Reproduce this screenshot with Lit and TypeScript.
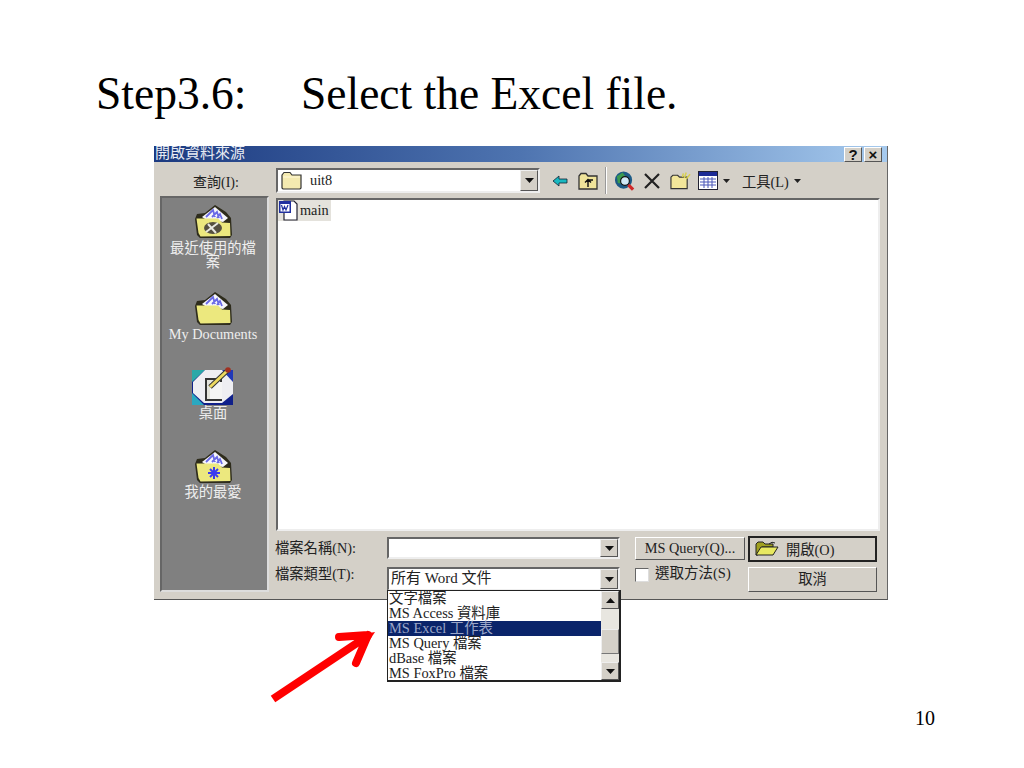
import { LitElement, html, css, svg } from "lit";
import { customElement } from "lit/decorators.js";

const caret = html`<svg class="caret" width="9" height="5" viewBox="0 0 9 5"><path d="M0 0H9L4.5 5Z" fill="#111"/></svg>`;
const caretSmall = html`<svg class="caret" width="7" height="4" viewBox="0 0 7 4"><path d="M0 0H7L3.5 4Z" fill="#222"/></svg>`;
const caretUp = html`<svg class="caret" width="9" height="5" viewBox="0 0 9 5"><path d="M0 5H9L4.5 0Z" fill="#111"/></svg>`;

function placeFolder(badge: unknown) {
  return html`<svg width="40" height="33" viewBox="0 0 40 33">
    <path d="M2 14 L4 9 L12 8 L22 0 L33 7 L38 13 L39 30 L37 33 L7 33 L4 30Z" fill="#2e2c1c"/>
    <path d="M9 12 L22 2 L35 13 L30 17 L12 14Z" fill="#f6f6fa"/>
    <path d="M13 12 L20 5 L22 12 M19 12 L24 7 L26 13 M24 13 L27 9 L29 14" fill="none" stroke="#6a6ae6" stroke-width="1.8"/>
    <path d="M3.5 13.5 L25 13.5 L29 17.5 L37 18 L37.5 31 L7.5 31.5 L5.5 28Z" fill="#ece87e"/>
    ${badge}
  </svg>`;
}

const recentBadge = svg`<ellipse cx="20" cy="23" rx="9" ry="6" fill="#555040"/><path d="M13 27 L25 18 M15 19 L23 28" stroke="#e8e8e0" stroke-width="2"/>`;
const starBadge = svg`<path d="M21 17V29M15 23H27M17 19L25 27M25 19L17 27" stroke="#3a3af0" stroke-width="2"/>`;

const desktopIcon = html`<svg width="42" height="38" viewBox="0 0 42 38">
  <rect x="0" y="3" width="41" height="35" fill="#10208a"/>
  <path d="M0 3H13L0 15Z" fill="#2aa8a8"/>
  <path d="M41 3V15L30 3Z" fill="#2038b8"/>
  <path d="M0 38V26L12 38Z" fill="#2aa8c0"/>
  <path d="M13 3H30L41 15V27L30 36H12L1 26V15Z" fill="#eeeef2"/>
  <rect x="14" y="12" width="15" height="21" fill="#e4e4dc" stroke="#333" stroke-width="2"/>
  <rect x="18" y="15" width="12" height="17" fill="#f4f4f4"/>
  <path d="M18 20 L35 4" stroke="#333" stroke-width="5"/>
  <path d="M18 20 L35 4" stroke="#eeda60" stroke-width="3"/>
  <circle cx="36" cy="3" r="2.8" fill="#a03020"/>
</svg>`;

const smallFolder = html`<svg width="22" height="19" viewBox="0 0 22 19">
  <path d="M1 4 L3 1.5 H9 L11 4 H20 V17 L19 18 H2 L1 17Z" fill="#f4eab0" stroke="#333" stroke-width="1.2"/>
  <path d="M2 6 H19" stroke="#fff8d8"/>
</svg>`;

const wordIcon = html`<svg width="22" height="22" viewBox="0 0 22 22">
  <path d="M6 1 H16 L19 4 V20 H6Z" fill="#fff" stroke="#223" stroke-width="1.2"/>
  <rect x="1" y="1" width="12" height="12" fill="#2030a0"/>
  <rect x="2.5" y="4" width="9" height="7.5" fill="#fff"/>
  <path d="M3.5 5 L5 10 L6.5 6.5 L8 10 L10 5" fill="none" stroke="#2030a0" stroke-width="1.2"/>
</svg>`;

const toolbar = [
  html`<svg class="t1" width="16" height="12" viewBox="0 0 16 12"><path d="M1 6 L7 1 V4 H15 V8 H7 V11Z" fill="#18b8c0" stroke="#123" stroke-width=".8"/></svg>`,
  html`<svg class="t2" width="20" height="18" viewBox="0 0 20 18"><path d="M1 4 L3 1.5 H8 L10 4 H19 V17 H1Z" fill="#f0e49a" stroke="#333" stroke-width="1.3"/><path d="M10 15V8M7 10.5L10 7.5L13 10.5M10 8H15" fill="none" stroke="#111" stroke-width="1.4"/></svg>`,
  html`<span class="tb-sep"></span>`,
  html`<svg class="t3" width="21" height="22" viewBox="0 0 22 22"><circle cx="10" cy="10" r="9" fill="#1d5a86"/><path d="M3 6 L9 2 L12 6 L8 9 L9 14 L4 13Z" fill="#3a9a50"/><circle cx="11.5" cy="11" r="4.6" fill="#cfe8f6" stroke="#111" stroke-width="1.2"/><path d="M15 15 L20 20" stroke="#d02828" stroke-width="3.4"/></svg>`,
  html`<svg class="t4" width="18" height="18" viewBox="0 0 18 18"><path d="M2 2 L16 16 M16 2 L2 16" stroke="#222" stroke-width="2.2"/></svg>`,
  html`<svg class="t5" width="21" height="19" viewBox="0 0 22 19"><path d="M1 6 L3 4 H8 L10 6 H18 V18 H1Z" fill="#f2e69a" stroke="#333" stroke-width="1.2"/><path d="M15 7 L17 1 M17 8 L21 3 M13 6 L14 2" stroke="#d8d050" stroke-width="1.6"/></svg>`,
  html`<svg class="t6" width="20" height="19" viewBox="0 0 20 19"><rect x="0.5" y="0.5" width="19" height="18" fill="#fff" stroke="#223"/><rect x="1" y="1" width="18" height="4" fill="#1c2a96"/><path d="M2 8H18M2 11H18M2 14H18M6 6V17M10 6V17M14 6V17" stroke="#4a56b8"/></svg>`,
  caretSmall,
];

@customElement("app-root")
export class AppRoot extends LitElement {
  static styles = css`
    :host { display: block; width: 1024px; height: 768px; background: #fff; overflow: hidden; }
    .page { position: relative; width: 1024px; height: 768px; box-sizing: border-box; padding-top: 66px; font-family: "Liberation Serif", serif; color: #000; }
    .heading { display: flex; margin-left: 96px; height: 80px; font-size: 45.5px; line-height: 56px; }
    .heading .step { width: 205px; }
    .dialog { position: relative; margin-left: 154px; width: 734px; height: 454px; box-sizing: border-box; background: #d4d0c8; font-family: "Liberation Serif", "Noto Sans CJK TC", serif; font-size: 14.3px; color: #222; filter: blur(0.5px); display: flex; flex-direction: column; border-right: 1px solid #666; border-bottom: 1px solid #555; }
    .titlebar { height: 16px; flex: none; display: flex; align-items: center; justify-content: space-between; padding: 0 5px 0 1px; background: linear-gradient(90deg, #1c3a80 0%, #4e74b0 50%, #a6caee 100%); color: #e8ecf4; font-size: 15px; line-height: 14px; overflow: hidden; }
    .titlebar .t { position: relative; top: -1px; }
    .winbtns { display: flex; gap: 2px; }
    .winbtn { width: 18px; height: 15px; background: #d4d0c8; border: 1px solid; border-color: #fff #555 #555 #fff; box-sizing: border-box; font: bold 15px/13px "Liberation Sans", sans-serif; color: #111; text-align: center; }
    .toolrow { height: 34px; box-sizing: border-box; padding-top: 3px; flex: none; display: flex; align-items: center; }
    .lookin { width: 122px; box-sizing: border-box; padding-left: 39px; font-size: 14px; white-space: nowrap; }
    .combo { display: flex; align-items: center; box-sizing: border-box; background: #fff; border: 2px solid; border-color: #666 #eee #eee #666; }
    .combo.top { width: 264px; height: 25px; padding-left: 3px; gap: 7px; }
    .combo .grow { flex: 1; }
    .dropbtn { width: 18px; align-self: stretch; display: flex; align-items: center; justify-content: center; background: #d4d0c8; border: 1px solid; border-color: #eee #555 #555 #eee; box-sizing: border-box; }
    .tools { display: flex; align-items: center; margin-left: 12px; gap: 0; }
    .tools .t2 { margin-left: 10px; }
    .tools > .tb-sep { width: 1px; height: 27px; background: #999; border-right: 1px solid #fff; margin: 0 7px 0 7px; }
    .tools .t4 { margin-left: 8px; }
    .tools .t5 { margin-left: 9px; }
    .tools .t6 { margin-left: 7px; }
    .tools .caret { margin-left: 5px; }
    .toolmenu { margin-left: 12px; display: flex; align-items: center; gap: 5px; font-size: 14.3px; white-space: nowrap; }
    .toolmenu .caret { margin-left: 0; }
    .body { flex: 1; display: flex; padding: 0 7px 7px 6px; min-height: 0; }
    .sidebar { width: 109px; flex: none; box-sizing: border-box; background: #808080; border: 2px solid; border-color: #666 #ddd #ddd #666; color: #eee; display: flex; flex-direction: column; align-items: center; padding: 7px 3px 0 0; text-align: center; line-height: 13px; }
    .place { width: 100%; display: flex; flex-direction: column; align-items: center; gap: 3px; flex: none; white-space: nowrap; }
    .place.p1 { height: 87px; white-space: normal; line-height: 14px; }
    .place.p2 { height: 75px; }
    .place.p3 { height: 83px; gap: 2px; }
    .place.p1 span { padding: 0 8px; }
    .right { flex: 1; margin-left: 7px; display: flex; flex-direction: column; min-width: 0; }
    .files { height: 333px; flex: none; margin-top: 2px; box-sizing: border-box; background: #fff; border: 2px solid; border-color: #666 #eee #eee #666; }
    .file { display: inline-flex; align-items: center; height: 21px; background: #e4e2dc; padding-right: 2px; color: #222; }
    .form { display: grid; grid-template-columns: 111px 233px 15px 110px 3px 129px; grid-template-rows: 26px 26px; row-gap: 4px; margin-top: 5px; align-items: start; }
    .form .label { white-space: nowrap; line-height: 24px; margin-left: -1px; }
    .form .label.second { line-height: 16px; }
    .field { height: 22px; margin-top: 1px; }
    .field.sel { height: 24px; padding-left: 2px; font-size: 15px; white-space: nowrap; }
    .field.sel .v { position: relative; top: -3px; }
    .btn { box-sizing: border-box; height: 23px; margin-top: 1px; background: #d4d0c8; border: 1px solid; border-color: #fff #555 #555 #fff; display: flex; align-items: center; justify-content: center; white-space: nowrap; }
    .btn.open { height: 26px; margin-top: 0; border: 2px solid #222; justify-content: flex-start; padding: 0 0 2px 5px; gap: 7px; }
    .btn.cancel { height: 25px; padding-bottom: 4px; }
    .check { grid-column: 4 / span 2; display: flex; align-items: center; gap: 6px; font-size: 14.5px; line-height: 18px; white-space: nowrap; }
    .check span { position: relative; top: -2px; }
    .box { width: 14px; height: 14px; flex: none; box-sizing: border-box; background: #fff; border: 1px solid; border-color: #666 #ddd #ddd #666; }
    .popup { position: absolute; left: 233px; top: 444px; width: 234px; height: 92px; box-sizing: border-box; background: #fff; border: 1px solid #222; border-right-width: 2px; border-bottom-width: 2px; display: flex; font-size: 14.4px; line-height: 15px; color: #222; }
    .items { flex: 1; }
    .item { height: 15px; padding-left: 1px; white-space: nowrap; }
    .item.on { background: #0a246a; color: #9aa6c8; }
    .scroll { width: 18px; flex: none; display: flex; flex-direction: column; background: #e8e6e0; }
    .sbtn { height: 18px; flex: none; display: flex; align-items: center; justify-content: center; background: #d4d0c8; border: 1px solid; border-color: #eee #555 #555 #eee; box-sizing: border-box; }
    .track { flex: 1; padding-top: 20px; }
    .thumb { height: 25px; background: #d4d0c8; border: 1px solid; border-color: #eee #777 #777 #eee; box-sizing: border-box; }
    .arrow { position: absolute; left: 268px; top: 628px; }
    .pageno { position: absolute; left: 915px; top: 707px; font-size: 20px; line-height: 22px; }
  `;

  render() {
    const items = ["文字檔案", "MS Access 資料庫", "MS Excel 工作表", "MS Query 檔案", "dBase 檔案", "MS FoxPro 檔案"];
    return html`<div class="page">
      <div class="heading"><span class="step">Step3.6:</span><span>Select the Excel file.</span></div>
      <div class="dialog">
        <div class="titlebar"><span class="t">開啟資料來源</span><div class="winbtns"><div class="winbtn">?</div><div class="winbtn">×</div></div></div>
        <div class="toolrow">
          <div class="lookin">查詢(I):</div>
          <div class="combo top">${smallFolder}<span>uit8</span><span class="grow"></span><div class="dropbtn">${caret}</div></div>
          <div class="tools">${toolbar}
            <div class="toolmenu"><span>工具(L)</span>${caretSmall}</div>
          </div>
        </div>
        <div class="body">
          <div class="sidebar">
            <div class="place p1">${placeFolder(recentBadge)}<span>最近使用的檔案</span></div>
            <div class="place p2">${placeFolder(svg``)}<span>My Documents</span></div>
            <div class="place p3">${desktopIcon}<span>桌面</span></div>
            <div class="place">${placeFolder(starBadge)}<span>我的最愛</span></div>
          </div>
          <div class="right">
            <div class="files"><div class="file">${wordIcon}<span>main</span></div></div>
            <div class="form">
              <div class="label">檔案名稱(N):</div>
              <div class="combo field"><span class="grow"></span><div class="dropbtn">${caret}</div></div>
              <span></span>
              <div class="btn">MS Query(Q)...</div>
              <span></span>
              <div class="btn open"><svg width="24" height="15" viewBox="0 0 24 15"><path d="M1 14 V3 L3 1 H8 L10 3 H18 V6 H7 L3 14Z" fill="#a0a020" stroke="#222"/><path d="M1 14 L6 6 H23 L18 14Z" fill="#e8e860" stroke="#222"/><path d="M14 3 Q17 0 20 2" fill="none" stroke="#222"/></svg><span>開啟(O)</span></div>
              <div class="label second">檔案類型(T):</div>
              <div class="combo field sel"><span class="v">所有 Word 文件</span><span class="grow"></span><div class="dropbtn">${caret}</div></div>
              <span></span>
              <div class="check"><div class="box"></div><span>選取方法(S)</span></div>
              <div class="btn cancel">取消</div>
            </div>
          </div>
        </div>
        <div class="popup">
          <div class="items">${items.map((t, i) => html`<div class="item ${i === 2 ? "on" : ""}">${t}</div>`)}</div>
          <div class="scroll">
            <div class="sbtn">${caretUp}</div>
            <div class="track"><div class="thumb"></div></div>
            <div class="sbtn">${caret}</div>
          </div>
        </div>
      </div>
      <svg class="arrow" width="112" height="80" viewBox="0 0 112 80">
        <path d="M5 71 L95 11" stroke="#ff0000" stroke-width="8" fill="none"/>
        <path d="M71 9 L100 7 M88 35 L100 7" stroke="#ff0000" stroke-width="8" stroke-linecap="round" fill="none"/>
        <path d="M107 4 L84 8 L94 24 Z" fill="#ff0000"/>
      </svg>
      <div class="pageno">10</div>
    </div>`;
  }
}
